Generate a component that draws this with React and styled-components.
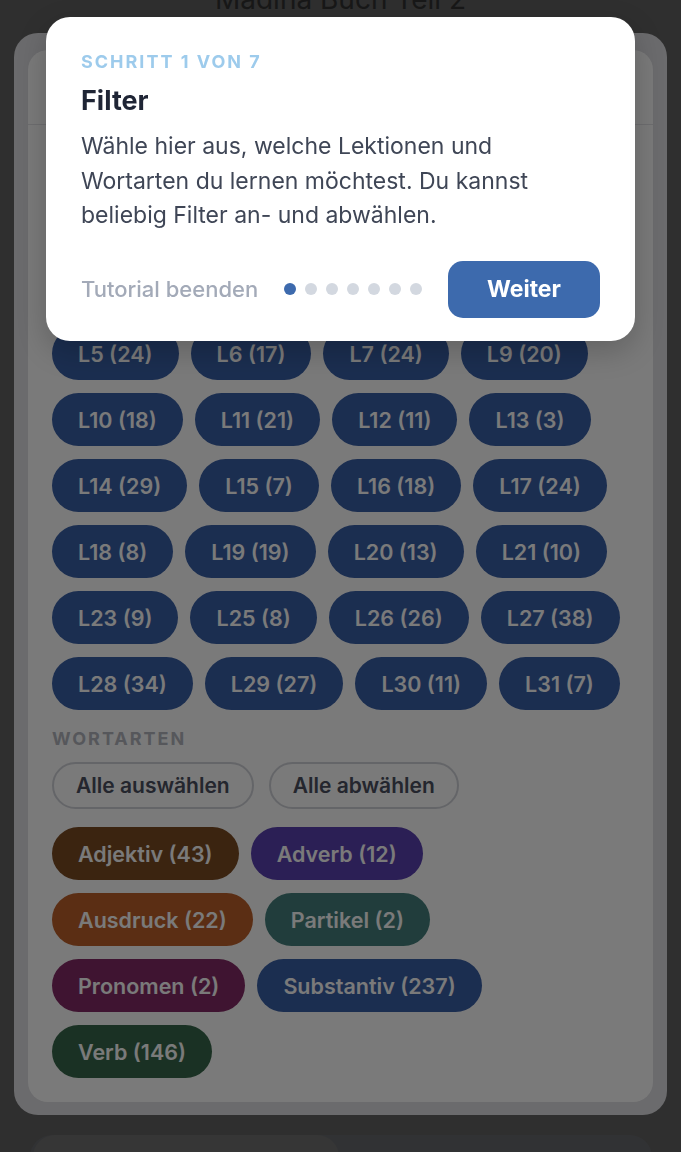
import React from "react";
import styled, { createGlobalStyle } from "styled-components";

const lessons = [
  ["L1", 12], ["L2", 15], ["L3", 19], ["L4", 22],
  ["L5", 24], ["L6", 17], ["L7", 24], ["L9", 20],
  ["L10", 18], ["L11", 21], ["L12", 11], ["L13", 3],
  ["L14", 29], ["L15", 7], ["L16", 18], ["L17", 24],
  ["L18", 8], ["L19", 19], ["L20", 13], ["L21", 10],
  ["L23", 9], ["L25", 8], ["L26", 26], ["L27", 38],
  ["L28", 34], ["L29", 27], ["L30", 11], ["L31", 7],
];

const wordTypes = [
  { name: "Adjektiv", count: 43, color: "#7b4b23" },
  { name: "Adverb", count: 12, color: "#5a41b1" },
  { name: "Ausdruck", count: 22, color: "#be602a" },
  { name: "Partikel", count: 2, color: "#45817d" },
  { name: "Pronomen", count: 2, color: "#852a66" },
  { name: "Substantiv", count: 237, color: "#3a60a7" },
  { name: "Verb", count: 146, color: "#38684b" },
];

function App() {
  return (
    <>
      <GlobalStyle />
      <Page>
        <PageTitle>Madina Buch Teil 2</PageTitle>
        <Sheet>
          <Panel>
            <PanelHeader>
              <PanelTitle>Filter</PanelTitle>
              <CloseButton>Fertig</CloseButton>
            </PanelHeader>
            <PanelBody>
              <Section>
                <SectionLabel>Lektionen</SectionLabel>
                <ButtonRow>
                  <OutlineButton>Alle auswählen</OutlineButton>
                  <OutlineButton>Alle abwählen</OutlineButton>
                </ButtonRow>
                <ChipWrap>
                  {lessons.map(([name, count]) => (
                    <Chip key={name} $color="#3a60a7">{name} ({count})</Chip>
                  ))}
                </ChipWrap>
              </Section>
              <Section>
                <SectionLabel>Wortarten</SectionLabel>
                <ButtonRow>
                  <OutlineButton>Alle auswählen</OutlineButton>
                  <OutlineButton>Alle abwählen</OutlineButton>
                </ButtonRow>
                <ChipWrap>
                  {wordTypes.map((w) => (
                    <Chip key={w.name} $color={w.color}>{w.name} ({w.count})</Chip>
                  ))}
                </ChipWrap>
              </Section>
            </PanelBody>
          </Panel>
        </Sheet>
        <BottomBar>
          <BottomPill />
        </BottomBar>
      </Page>

      <Overlay />

      <Tooltip>
        <StepLabel>Schritt 1 von 7</StepLabel>
        <TipTitle>Filter</TipTitle>
        <TipText>
          Wähle hier aus, welche Lektionen und Wortarten du lernen möchtest. Du kannst beliebig Filter an- und abwählen.
        </TipText>
        <TipFooter>
          <SkipLink>Tutorial beenden</SkipLink>
          <Dots>
            {Array.from({ length: 7 }).map((_, i) => (
              <Dot key={i} $active={i === 0} />
            ))}
          </Dots>
          <NextButton>Weiter</NextButton>
        </TipFooter>
      </Tooltip>
    </>
  );
}

const GlobalStyle = createGlobalStyle`
  html, body {
    margin: 0;
    padding: 0;
    background: #626262;
  }
  body {
    font-family: Inter, "Noto Sans", "Liberation Sans", sans-serif;
    overflow: hidden;
  }
  * { box-sizing: border-box; }
`;

const Page = styled.div`
  min-height: 100vh;
  background: #626262;
  display: flex;
  flex-direction: column;
`;

const PageTitle = styled.h1`
  margin: -20px 0 0;
  height: 38px;
  line-height: 38px;
  text-align: center;
  font-size: 28px;
  font-weight: 400;
  color: #333333;
`;

const Sheet = styled.div`
  margin: 15px 14px 0;
  padding: 17px 14px 13px;
  background: #dfdfe3;
  border-radius: 24px;
`;

const Panel = styled.div`
  background: #ffffff;
  border-radius: 20px;
  overflow: hidden;
`;

const PanelHeader = styled.div`
  height: 75px;
  display: flex;
  align-items: center;
  justify-content: space-between;
  padding: 0 24px;
  border-bottom: 1px solid #e3e4e8;
`;

const PanelTitle = styled.h2`
  margin: 0;
  font-size: 22px;
  font-weight: 700;
  color: #1f2937;
`;

const CloseButton = styled.span`
  font-size: 18px;
  font-weight: 600;
  color: #3d6aad;
`;

const PanelBody = styled.div`
  padding: 38px 24px 24px;
  display: flex;
  flex-direction: column;
  gap: 19px;
`;

const Section = styled.div`
  display: flex;
  flex-direction: column;
`;

const SectionLabel = styled.div`
  font-size: 18px;
  line-height: 20px;
  font-weight: 700;
  letter-spacing: 2px;
  text-transform: uppercase;
  color: #b3b6be;
  margin-bottom: 13px;
`;

const ButtonRow = styled.div`
  display: flex;
  gap: 15px;
  margin-bottom: 18px;
`;

const OutlineButton = styled.button`
  height: 47px;
  padding: 0 22px;
  border: 2px solid #d2d4da;
  border-radius: 24px;
  background: transparent;
  font-family: inherit;
  font-size: 21px;
  font-weight: 600;
  color: #4b5060;
`;

const ChipWrap = styled.div`
  display: flex;
  flex-wrap: wrap;
  gap: 13px 12px;
`;

const Chip = styled.span`
  height: 53px;
  display: inline-flex;
  align-items: center;
  padding: 0 26px;
  border-radius: 27px;
  background: ${(p) => p.$color};
  color: #ffffff;
  font-size: 21.5px;
  font-weight: 600;
  white-space: nowrap;
`;

const BottomBar = styled.div`
  margin: 20px 29px 0 30px;
  height: 60px;
  padding: 0 0 0 3px;
  background: #686a6e;
  border-radius: 22px 22px 0 0;
  display: flex;
`;

const BottomPill = styled.div`
  width: 306px;
  height: 60px;
  background: #727272;
  border-radius: 22px 22px 0 0;
`;

const Overlay = styled.div`
  position: fixed;
  inset: 0;
  background: rgba(0, 0, 0, 0.52);
`;

const Tooltip = styled.div`
  position: fixed;
  top: 17px;
  left: 46px;
  width: 589px;
  padding: 34px 35px 23px;
  background: #ffffff;
  border-radius: 24px;
  box-shadow: 0 10px 30px rgba(0, 0, 0, 0.2);
`;

const StepLabel = styled.div`
  font-size: 18px;
  line-height: 22px;
  font-weight: 700;
  letter-spacing: 2px;
  text-transform: uppercase;
  color: #9dcbec;
`;

const TipTitle = styled.div`
  margin-top: 12px;
  font-size: 27px;
  line-height: 32px;
  font-weight: 700;
  color: #1f2535;
`;

const TipText = styled.p`
  margin: 12px 0 0;
  max-width: 480px;
  font-size: 23px;
  line-height: 34.5px;
  color: #3f4656;
`;

const TipFooter = styled.div`
  margin-top: 28px;
  display: flex;
  align-items: center;
  justify-content: space-between;
`;

const SkipLink = styled.span`
  font-size: 22px;
  font-weight: 500;
  color: #a3aab8;
`;

const Dots = styled.div`
  display: flex;
  gap: 9px;
`;

const Dot = styled.span`
  width: 12px;
  height: 12px;
  border-radius: 50%;
  background: ${(p) => (p.$active ? "#3d6aad" : "#d3d8e0")};
`;

const NextButton = styled.button`
  width: 152px;
  height: 57px;
  border: none;
  border-radius: 15px;
  background: #3d6aad;
  color: #ffffff;
  font-family: inherit;
  font-size: 23px;
  font-weight: 700;
`;

export default App;
